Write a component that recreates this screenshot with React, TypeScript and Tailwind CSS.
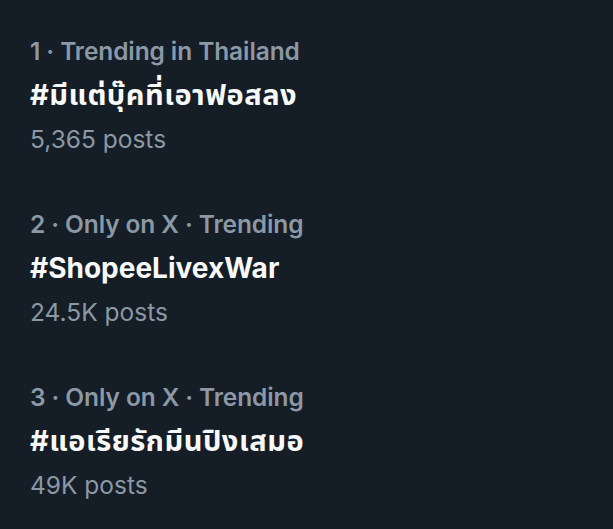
import React from "react";

const trends = [
  {
    rank: 1,
    context: "Trending in Thailand",
    tag: "#มีแต่บุ๊คที่เอาฟอสลง",
    posts: "5,365 posts",
    tagClass: "text-[29px] tracking-[0.5px]",
  },
  { rank: 2, context: "Only on X · Trending", tag: "#ShopeeLivexWar", posts: "24.5K posts", tagClass: "text-[28px]" },
  {
    rank: 3,
    context: "Only on X · Trending",
    tag: "#แอเรียรักมีนปิงเสมอ",
    posts: "49K posts",
    tagClass: "text-[29px] tracking-[0.5px]",
  },
];

function TrendItem({
  rank,
  context,
  tag,
  posts,
  tagClass,
}: {
  rank: number;
  context: string;
  tag: string;
  posts: string;
  tagClass: string;
}) {
  return (
    <div className="flex flex-col gap-[8px] h-[173px]">
      <div className="text-[24.5px] leading-[36px] font-semibold text-[#8b98a5] tracking-[-0.1px]">
        {rank} · {context}
      </div>
      <div className={`${tagClass} leading-[36px] font-bold text-[#f7f9f9]`}>{tag}</div>
      <div className="text-[24.5px] leading-[36px] text-[#8b98a5]">{posts}</div>
    </div>
  );
}

export default function App() {
  return (
    <div
      className="w-[613px] h-[529px] bg-[#151d26] px-[30px] pt-[33px] overflow-hidden"
      style={{ fontFamily: 'Inter, "Noto Sans", "Noto Sans Thai", "Noto Sans CJK SC", sans-serif' }}
    >
      {trends.map((t) => (
        <TrendItem key={t.rank} {...t} />
      ))}
    </div>
  );
}
